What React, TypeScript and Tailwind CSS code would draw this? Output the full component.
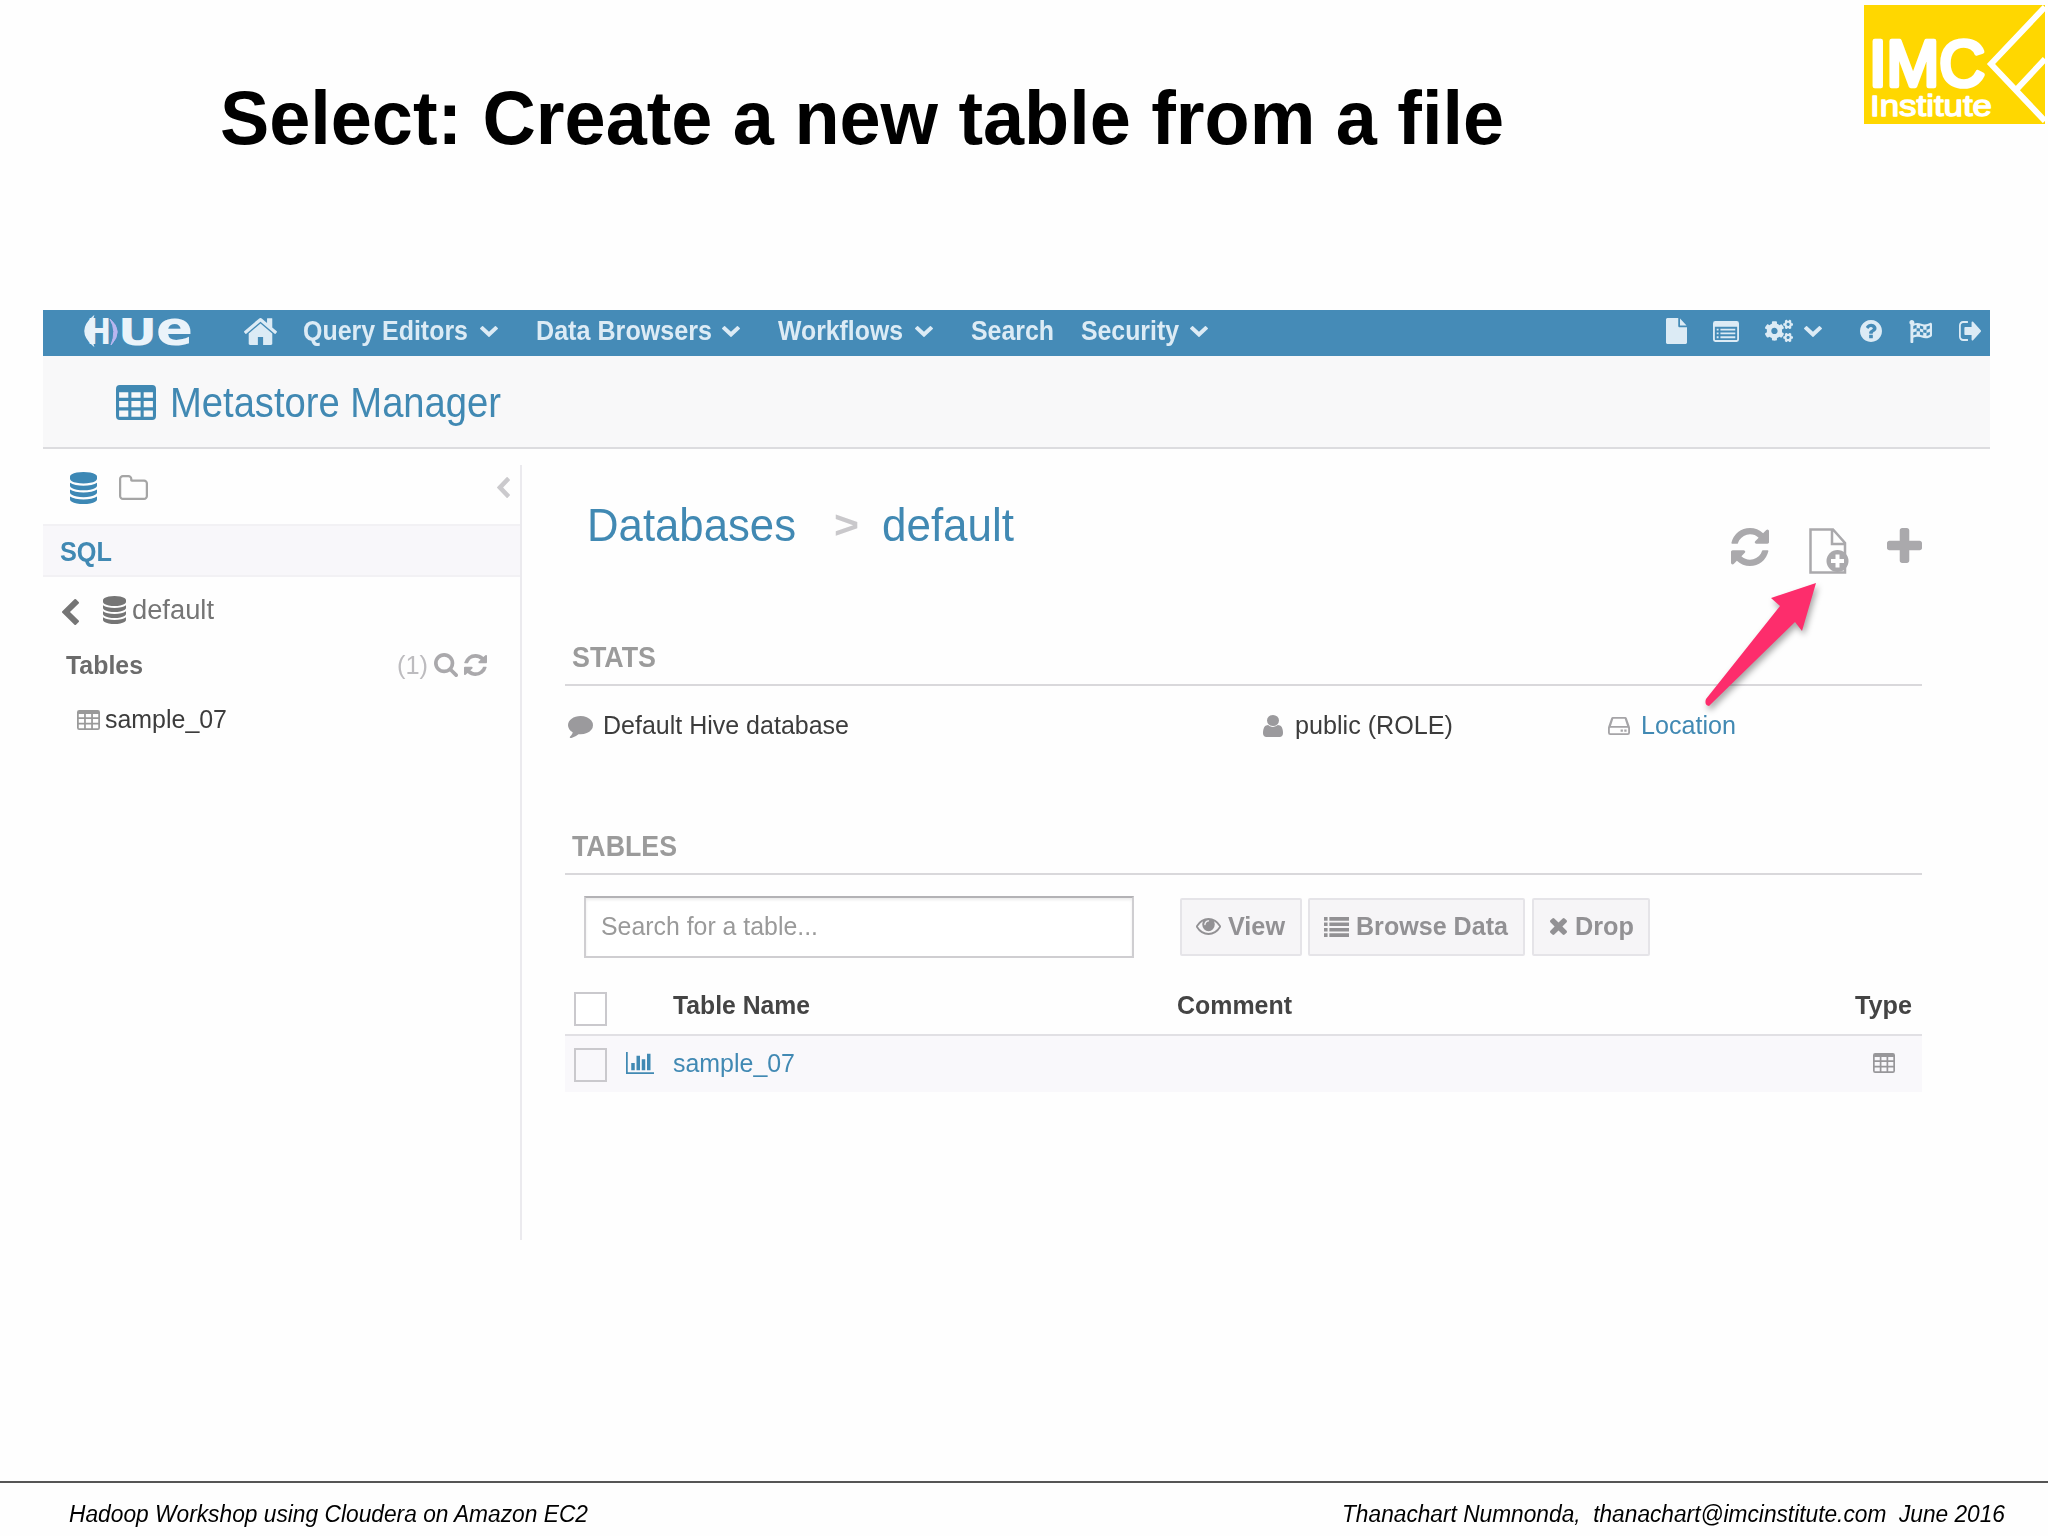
import { useLayoutEffect, useRef, useState } from 'react';
import type { ReactNode } from 'react';
import { FaCogs, FaFlagCheckered } from 'react-icons/fa';

interface FitTextProps {
  className: string;
  children: ReactNode;
}

// Single line of text condensed or widened to the width of its box
function FitText({ className, children }: FitTextProps) {
  const box = useRef<HTMLSpanElement>(null);
  const inner = useRef<HTMLSpanElement>(null);
  const [scale, setScale] = useState(1);

  useLayoutEffect(() => {
    if (box.current && inner.current) {
      setScale(box.current.offsetWidth / inner.current.getBoundingClientRect().width);
    }
  }, []);

  return (
    <span ref={box} className={`block shrink-0 whitespace-pre ${className}`}>
      <span ref={inner} className="inline-block origin-left" style={{ transform: `scaleX(${scale})` }}>
        {children}
      </span>
    </span>
  );
}

const icons = {
  home: {
    box: '90 248 1613 1288',
    d: 'M1472 992v480q0 26-19 45t-45 19h-384v-384h-256v384h-384q-26 0-45-19t-19-45v-480q0-1 .5-3t.5-3l575-474 575 474q1 2 1 6zm223-69l-62 74q-8 9-21 11h-3q-13 0-21-7l-692-577-692 577q-12 8-24 7-13-2-21-11l-62-74q-8-10-7-23.5t11-21.5l719-599q32-26 76-26t76 26l244 204v-195q0-14 9-23t23-9h192q14 0 23 9t9 23v408l219 182q10 8 11 21.5t-7 23.5z',
  },
  chevronDown: {
    box: '90 533 1612 1035',
    d: 'M1683 808l-742 741q-19 19-45 19t-45-19l-742-741q-19-19-19-45.5t19-45.5l166-165q19-19 45-19t45 19l531 531 531-531q19-19 45-19t45 19l166 165q19 19 19 45.5t-19 45.5z',
  },
  chevronLeft: {
    box: '0 0 1035 1612',
    d: 'M760 19l-741 742q-19 19-19 45t19 45l741 742q19 19 45.500 19t45.500-19l165-166q19-19 19-45t-19-45l-531-531 531-531q19-19 19-45t-19-45l-165-166q-19-19-45.500-19t-45.500 19z',
  },
  file: {
    box: '0 0 1536 1792',
    d: 'M1024 512v-472q22 14 36 28l408 408q14 14 28 36zm-128 32q0 40 28 68t68 28h544v1056q0 40-28 68t-68 28h-1344q-40 0-68-28t-28-68v-1600q0-40 28-68t68-28h800z',
  },
  listAlt: {
    box: '0 0 1792 1408',
    d: 'M160 0h1472q160 0 160 160v1088q0 160-160 160h-1472q-160 0-160-160v-1088q0-160 160-160zM128 384v832q0 64 64 64h1408q64 0 64-64v-832zM256 512h128v128h-128zM512 512h1024v128h-1024zM256 768h128v128h-128zM512 768h1024v128h-1024zM256 1024h128v128h-128zM512 1024h1024v128h-1024z',
  },
  question: {
    box: '128 128 1536 1536',
    d: 'M1024 1376v-192q0-14-9-23t-23-9h-192q-14 0-23 9t-9 23v192q0 14 9 23t23 9h192q14 0 23-9t9-23zm256-672q0-88-55.5-163t-138.5-116-170-41q-243 0-371 213-15 24 8 42l132 100q7 6 19 6 16 0 25-12 53-68 86-92 34-24 86-24 48 0 85.5 26t37.5 59q0 38-20 61t-68 45q-63 28-115.5 86.5t-52.5 125.5v36q0 14 9 23t23 9h192q14 0 23-9t9-23q0-19 21.5-49.5t54.5-49.5q32-18 49-28.5t46-35 44.5-48 28-60.5 12.5-81zm384 192q0 209-103 385.5t-279.5 279.5-385.5 103-385.5-103-279.5-279.5-103-385.5 103-385.5 279.5-279.5 385.5-103 385.5 103 279.5 279.5 103 385.5z',
  },
  signOut: {
    box: '64 256 1568 1280',
    d: 'M704 1440q0 4 1 20t.5 26.5-3 23.5-10 19.5-20.5 6.5h-320q-119 0-203.5-84.5t-84.5-203.5v-704q0-119 84.5-203.5t203.5-84.5h320q13 0 22.5 9.5t9.5 22.5q0 4 1 20t.5 26.5-3 23.5-10 19.5-20.5 6.5h-320q-66 0-113 47t-47 113v704q0 66 47 113t113 47h312l11.5 1 11.5 3 8 5.5 7 9 2 13.5zm928-544q0 26-19 45l-544 544q-19 19-45 19t-45-19-19-45v-288h-448q-26 0-45-19t-19-45v-384q0-26 19-45t45-19h448v-288q0-26 19-45t45-19 45 19l544 544q19 19 19 45z',
  },
  table: {
    box: '0 0 1664 1408',
    d: 'M160 0h1344q160 0 160 160v1088q0 160-160 160h-1344q-160 0-160-160v-1088q0-160 160-160zM128 288v224h384v-224zM640 288v224h384v-224zM1152 288v224h384v-224zM128 640v256h384v-256zM640 640v256h384v-256zM1152 640v256h384v-256zM128 1024v256h384v-256zM640 1024v256h384v-256zM1152 1024v256h384v-256z',
  },
  database: {
    box: '128 0 1536 1792',
    d: 'M896 768q237 0 443-43t325-127v170q0 69-103 128t-280 93.5-385 34.5-385-34.5-280-93.5-103-128v-170q119 84 325 127t443 43zm0 768q237 0 443-43t325-127v170q0 69-103 128t-280 93.5-385 34.5-385-34.5-280-93.5-103-128v-170q119 84 325 127t443 43zm0-384q237 0 443-43t325-127v170q0 69-103 128t-280 93.5-385 34.5-385-34.5-280-93.5-103-128v-170q119 84 325 127t443 43zm0-1152q208 0 385 34.5t280 93.5 103 128v128q0 69-103 128t-280 93.5-385 34.5-385-34.5-280-93.5-103-128v-128q0-69 103-128t280-93.5 385-34.5z',
  },
  folder: {
    box: '64 128 1664 1408',
    d: 'M1600 1312v-704q0-40-28-68t-68-28h-704q-40 0-68-28t-28-68v-64q0-40-28-68t-68-28h-320q-40 0-68 28t-28 68v960q0 40 28 68t68 28h1216q40 0 68-28t28-68zm128-704v704q0 92-66 158t-158 66h-1216q-92 0-158-66t-66-158v-960q0-92 66-158t158-66h320q92 0 158 66t66 158v32h672q92 0 158 66t66 158z',
  },
  search: {
    box: '64 128 1664 1664',
    d: 'M1216 832q0-185-131.5-316.5t-316.5-131.5-316.5 131.5-131.5 316.5 131.5 316.5 316.5 131.5 316.5-131.5 131.5-316.5zm512 832q0 52-38 90t-90 38q-54 0-90-38l-343-342q-179 124-399 124-143 0-273.5-55.5t-225-150-150-225-55.5-273.5 55.5-273.5 150-225 225-150 273.5-55.5 273.5 55.5 225 150 150 225 55.5 273.5q0 220-124 399l343 343q37 37 37 90z',
  },
  refresh: {
    box: '128 128 1536 1536',
    d: 'M1639 1056q0 5-1 7-64 268-268 434.5t-478 166.5q-146 0-282.5-55t-243.5-157l-129 129q-19 19-45 19t-45-19-19-45v-448q0-26 19-45t45-19h448q26 0 45 19t19 45-19 45l-137 137q71 66 161 102t187 36q134 0 250-65t186-179q11-17 53-117 8-23 30-23h192q13 0 22.5 9.5t9.5 22.5zm25-800v448q0 26-19 45t-45 19h-448q-26 0-45-19t-19-45 19-45l138-138q-148-137-349-137-134 0-250 65t-186 179q-11 17-53 117-8 23-30 23h-199q-13 0-22.5-9.5t-9.5-22.5v-7q65-268 270-434.5t480-166.5q146 0 284 55.5t245 156.5l130-129q19-19 45-19t45 19 19 45z',
  },
  plus: {
    box: '192 128 1408 1408',
    d: 'M1600 736v192q0 40-28 68t-68 28h-416v416q0 40-28 68t-68 28h-192q-40 0-68-28t-28-68v-416h-416q-40 0-68-28t-28-68v-192q0-40 28-68t68-28h416v-416q0-40 28-68t68-28h192q40 0 68 28t28 68v416h416q40 0 68 28t28 68z',
  },
  comment: {
    box: '0 256 1792 1536',
    d: 'M1792 896q0 174-120 321.5t-326 233-450 85.5q-70 0-145-8-198 175-460 242-49 14-114 22-17 2-30.5-9t-17.5-29v-1q-3-4-.5-12t2-10 4.5-9.5l6-9 7-8.5 8-9q7-8 31-34.5t34.5-38 31-39.5 32.5-51 27-59 26-76q-157-89-247.5-220t-90.5-281q0-130 71-248.5t191-204.5 286-136.5 348-50.5q244 0 450 85.5t326 233 120 321.5z',
  },
  user: {
    box: '256 128 1280 1536',
    d: 'M1536 1399q0 109-62.5 187t-150.5 78h-854q-88 0-150.5-78t-62.5-187q0-85 8.5-160.5t31.5-152 58.5-131 94-89 134.5-34.5q131 128 313 128t313-128q76 0 134.5 34.5t94 89 58.5 131 31.5 152 8.5 160.5zm-256-887q0 159-112.5 271.5t-271.5 112.5-271.5-112.5-112.5-271.5 112.5-271.5 271.5-112.5 271.5 112.5 112.5 271.5z',
  },
  disk: {
    box: '0 0 1536 1280',
    d: 'M340 0h856q90 0 120 85l200 590q20 60 20 120v325q0 160-160 160h-1216q-160 0-160-160v-325q0-60 20-120l200-590q30-85 120-85zM370 128l-167 512h1130l-167-512zM128 800v320q0 32 32 32h1216q32 0 32-32v-320q0-32-32-32h-1216q-32 0-32 32zM880 880h160v160h-160zM1136 880h160v160h-160z',
  },
  eye: {
    box: '0 384 1792 1152',
    d: 'M1664 960q-152-236-381-353 61 104 61 225 0 185-131.5 316.5t-316.5 131.5-316.5-131.5-131.5-316.5q0-121 61-225-229 117-381 353 133 205 333.5 326.5t434.5 121.5 434.5-121.5 333.5-326.5zm-720-384q0-20-14-34t-34-14q-125 0-214.5 89.5t-89.5 214.5q0 20 14 34t34 14 34-14 14-34q0-86 61-147t147-61q20 0 34-14t14-34zm848 384q0 34-20 69-140 230-376.5 368.5t-499.5 138.5-499.5-139-376.5-368q-20-35-20-69t20-69q140-229 376.5-368t499.5-139 499.5 139 376.5 368q20 35 20 69z',
  },
  list: {
    box: '0 0 1792 1408',
    d: 'M0 0h256v256h-256zM384 0h1408v256h-1408zM0 384h256v256h-256zM384 384h1408v256h-1408zM0 768h256v256h-256zM384 768h1408v256h-1408zM0 1152h256v256h-256zM384 1152h1408v256h-1408z',
  },
  times: {
    box: '302 366 1188 1188',
    d: 'M1490 1322q0 40-28 68l-136 136q-28 28-68 28t-68-28l-294-294-294 294q-28 28-68 28t-68-28l-136-136q-28-28-28-68t28-68l294-294-294-294q-28-28-28-68t28-68l136-136q28-28 68-28t68 28l294 294 294-294q28-28 68-28t68 28l136 136q28 28 28 68t-28 68l-294 294 294 294q28 28 28 68z',
  },
  chart: {
    box: '0 128 2048 1536',
    d: 'M640 896v512h-256v-512h256zm384-512v1024h-256v-1024h256zm1024 1152v128h-2048v-1536h128v1408h1920zm-640-896v768h-256v-768h256zm384-384v1152h-256v-1152h256z',
  },
};

function Icon({ name, className }: { name: keyof typeof icons; className: string }) {
  return (
    <svg viewBox={icons[name].box} preserveAspectRatio="none" fill="currentColor" className={`shrink-0 ${className}`}>
      <path fillRule="evenodd" d={icons[name].d} />
    </svg>
  );
}

function ImcLogo() {
  return (
    <svg viewBox="0 0 181 119" className="w-[181px] h-[119px] shrink-0 overflow-visible">
      <rect width="181" height="119" fill="#ffd700" />
      <path d="M181 2L127 59L181 116M153 84L181 54" fill="none" stroke="#fff" strokeWidth="6" />
      <g fill="#fff" stroke="#fff" strokeLinejoin="round" fontFamily="Liberation Sans, sans-serif">
        <text x="5" y="81" fontSize="64" strokeWidth="4.5" textLength="116" lengthAdjust="spacingAndGlyphs">IMC</text>
        <text x="6" y="111" fontSize="29" strokeWidth="1.3" textLength="122" lengthAdjust="spacingAndGlyphs">Institute</text>
      </g>
    </svg>
  );
}

function HueLogo() {
  return (
    <svg viewBox="0 0 107 30" className="w-[107px] h-[30px] shrink-0 overflow-visible">
      <path d="M9 1Q-7 15 9 29Q5 15 9 1z" fill="#e6f1f9" stroke="#e6f1f9" strokeWidth="1.5" />
      <path d="M26 3Q40 15 27 29Q33 15 26 3z" fill="#b9b6f0" stroke="#b9b6f0" />
      <g fill="#eaf3fa" fontFamily="DejaVu Sans, sans-serif" fontWeight="700">
        <text x="3" y="28" fontSize="36" textLength="24" lengthAdjust="spacingAndGlyphs">H</text>
        <text x="34" y="28.500" fontSize="38" textLength="39" lengthAdjust="spacingAndGlyphs">U</text>
        <text x="72" y="28.500" fontSize="48" textLength="37" lengthAdjust="spacingAndGlyphs">e</text>
      </g>
    </svg>
  );
}

function NavBar() {
  return (
    <nav className="flex h-[46px] items-center bg-[#458bb7] pb-[4px] pl-[41px] pr-[9px] text-[27px] font-bold text-[#dcebf5]">
      <HueLogo />
      <Icon name="home" className="ml-[53px] h-[27px] w-[33px]" />
      <FitText className="ml-[26px] w-[165px]">Query Editors</FitText>
      <Icon name="chevronDown" className="ml-[12px] h-[11px] w-[18px]" />
      <FitText className="ml-[38px] w-[176px]">Data Browsers</FitText>
      <Icon name="chevronDown" className="ml-[10px] h-[11px] w-[18px]" />
      <FitText className="ml-[38px] w-[125px]">Workflows</FitText>
      <Icon name="chevronDown" className="ml-[12px] h-[11px] w-[18px]" />
      <FitText className="ml-[38px] w-[83px]">Search</FitText>
      <FitText className="ml-[27px] w-[98px]">Security</FitText>
      <Icon name="chevronDown" className="ml-[11px] h-[11px] w-[18px]" />

      <div className="ml-auto flex items-center">
        <Icon name="file" className="h-[26px] w-[21px]" />
        <Icon name="listAlt" className="ml-[26px] h-[21px] w-[26px]" />
        <FaCogs className="ml-[26px] h-[28px] w-[28px]" />
        <Icon name="chevronDown" className="ml-[11px] h-[11px] w-[18px]" />
        <Icon name="question" className="ml-[38px] h-[22px] w-[22px]" />
        <FaFlagCheckered className="ml-[26px] h-[23px] w-[25px]" />
        <Icon name="signOut" className="ml-[26px] h-[20px] w-[22px]" />
      </div>
    </nav>
  );
}

function Sidebar() {
  return (
    <aside className="mt-[16px] flex h-[775px] w-[479px] shrink-0 flex-col border-r-2 border-[#ebeaee]">
      <div className="flex h-[59px] items-center pb-[14px] pl-[27px] pr-[10px] pt-0">
        <Icon name="database" className="h-[32px] w-[27px] text-[#3d88b5]" />
        <Icon name="folder" className="ml-[22px] h-[25px] w-[29px] text-[#a5a5a5]" />
        <Icon name="chevronLeft" className="ml-auto h-[21px] w-[13px] text-[#cbcacd]" />
      </div>
      <div className="flex h-[53px] items-center border-y-2 border-[#f2f1f4] bg-[#f8f7fa] pl-[17px] pt-[3px] text-[27px] font-bold text-[#4189b3]">
        <FitText className="w-[52px]">SQL</FitText>
      </div>
      <div className="flex h-[66px] items-center pl-[19px] text-[27px] text-[#757575]">
        <div className="flex items-center">
          <Icon name="chevronLeft" className="mt-[3px] h-[26px] w-[17px]" />
          <Icon name="database" className="ml-[24px] h-[28px] w-[23px]" />
          <FitText className="ml-[6px] w-[82px]">default</FitText>
        </div>
      </div>
      <div className="flex h-[44px] items-center pl-[23px] pr-[33px] text-[26px] text-[#bdbcbf]">
        <FitText className="w-[77px] font-bold text-[#6b6b6b]">Tables</FitText>
        <FitText className="ml-auto w-[31px]">(1)</FitText>
        <Icon name="search" className="ml-[6px] h-[24px] w-[24px] text-[#aaa9ac]" />
        <Icon name="refresh" className="ml-[6px] h-[22px] w-[23px] text-[#aaa9ac]" />
      </div>
      <div className="flex h-[65px] items-center pl-[34px] text-[26px] text-[#3c3c3c]">
        <Icon name="table" className="h-[20px] w-[23px] text-[#9a9a9a]" />
        <FitText className="ml-[5px] w-[122px]">sample_07</FitText>
      </div>
    </aside>
  );
}

function FileAddIcon() {
  return (
    <svg viewBox="0 0 40 46" className="ml-[40px] h-[46px] w-[40px] shrink-0" fill="none" stroke="#aaa9ac" strokeWidth="2.500">
      <path d="M1.500 1.500H24L36 15V44.500H1.500zM23 2V16H36" />
      <circle cx="28.500" cy="33" r="11" fill="#aaa9ac" stroke="none" />
      <path d="M28.500 26.500v13M22 33h13" stroke="#fff" strokeWidth="4" />
    </svg>
  );
}

function PointerArrow() {
  return (
    <svg viewBox="0 0 124 138" className="absolute left-[1700px] top-[577px] h-[138px] w-[124px] drop-shadow-[2px_4px_3px_rgba(0,0,0,0.35)]">
      <path d="M116 6L71 21L80 29L6 122Q4 128 9 129L95 45L102 54z" fill="#fd2d6c" />
    </svg>
  );
}

function Main() {
  return (
    <main className="flex w-[1357px] flex-col ml-[43px]">
      <div className="flex h-[192px] text-[47px] text-[#4189b3]">
        <div className="flex h-[153px] items-center">
          <FitText className="ml-[22px] w-[209px]">Databases</FitText>
          <FitText className="ml-[38px] w-[25px] text-[38px] font-bold text-[#c9c8cb]">&gt;</FitText>
          <FitText className="ml-[23px] w-[132px]">default</FitText>
        </div>
        <div className="ml-auto flex items-start pt-[79px] text-[#aaa9ac]">
          <Icon name="refresh" className="h-[38px] w-[38px]" />
          <FileAddIcon />
          <Icon name="plus" className="ml-[38px] h-[35px] w-[35px]" />
        </div>
      </div>

      <h2 className="flex h-[45px] items-center border-b-2 border-[#d9d8db] pb-[10px] pl-[7px] text-[29px] leading-none font-bold text-[#9b9b9b]">
        <FitText className="w-[84px]">STATS</FitText>
      </h2>
      <div className="flex h-[79px] items-center text-[26px] text-[#3c3c3c]">
        <Icon name="comment" className="ml-[3px] mt-[3px] h-[22px] w-[25px] text-[#9b9a9d]" />
        <FitText className="ml-[10px] w-[246px]">Default Hive database</FitText>
        <Icon name="user" className="ml-[414px] h-[22px] w-[20px] text-[#9b9a9d]" />
        <FitText className="ml-[12px] w-[158px]">public (ROLE)</FitText>
        <Icon name="disk" className="ml-[155px] h-[18px] w-[22px] text-[#a5a4a7]" />
        <FitText className="ml-[11px] w-[95px] text-[#4189b3]">Location</FitText>
      </div>

      <h2 className="mt-[57px] flex h-[53px] items-center border-b-2 border-[#d9d8db] pb-[2px] pl-[7px] text-[29px] font-bold text-[#9b9b9b]">
        <FitText className="w-[105px]">TABLES</FitText>
      </h2>
      <div className="flex h-[103px] items-center pl-[19px] text-[26px] font-bold text-[#929194]">
        <div className="flex h-[62px] w-[550px] items-center border-2 border-[#cfced1] border-t-[#b3b2b5] bg-white pl-[15px] font-normal text-[#9a9a9a] shadow-[inset_0_2px_3px_rgba(0,0,0,0.08)]">
          <FitText className="w-[217px]">Search for a table...</FitText>
        </div>
        <button className="ml-[46px] flex h-[58px] w-[122px] items-center rounded-xs border-2 border-[#e5e4e8] bg-[#f6f5f7] pl-[14px]">
          <Icon name="eye" className="h-[17px] w-[25px]" />
          <FitText className="ml-[7px] w-[57px]">View</FitText>
        </button>
        <button className="ml-[6px] flex h-[58px] w-[217px] items-center rounded-xs border-2 border-[#e5e4e8] bg-[#f6f5f7] pl-[14px]">
          <Icon name="list" className="h-[20px] w-[25px]" />
          <FitText className="ml-[7px] w-[152px]">Browse Data</FitText>
        </button>
        <button className="ml-[7px] flex h-[58px] w-[118px] items-center rounded-xs border-2 border-[#e5e4e8] bg-[#f6f5f7] pl-[16px]">
          <Icon name="times" className="h-[17px] w-[17px]" />
          <FitText className="ml-[8px] w-[59px]">Drop</FitText>
        </button>
      </div>

      <div className="flex h-[58px] items-center border-b-2 border-[#e1e0e4] pb-[2px] text-[26px] font-bold text-[#444]">
        <span className="ml-[9px] mt-[8px] h-[34px] w-[33px] border-2 border-[#cac9cd] bg-white" />
        <FitText className="ml-[66px] w-[137px]">Table Name</FitText>
        <FitText className="ml-[367px] w-[115px]">Comment</FitText>
        <FitText className="ml-auto mr-[10px] w-[57px]">Type</FitText>
      </div>
      <div className="flex h-[56px] items-center bg-[#f9f8fb] pb-[2px] text-[26px] text-[#4189b3]">
        <span className="ml-[9px] mt-[4px] h-[34px] w-[33px] border-2 border-[#cac9cd]" />
        <Icon name="chart" className="ml-[19px] h-[22px] w-[28px]" />
        <FitText className="ml-[19px] w-[122px]">sample_07</FitText>
        <Icon name="table" className="ml-auto mr-[27px] h-[20px] w-[22px] text-[#98979a]" />
      </div>
    </main>
  );
}

export default function App() {
  return (
    <div className="relative flex h-[1536px] w-[2048px] flex-col overflow-hidden bg-[#fefefe] font-['Liberation_Sans',sans-serif]">
      <header className="flex h-[310px] items-start pl-[220px] pr-[3px] pt-[5px] text-black">
        <h1 className="pt-[63px] text-[76px] leading-[100px] font-bold">
          <FitText className="w-[1284px]">Select: Create a new table from a file</FitText>
        </h1>
        <div className="ml-auto">
          <ImcLogo />
        </div>
      </header>

      <section className="ml-[43px] flex w-[1947px] flex-col">
        <NavBar />
        <div className="flex h-[93px] items-center border-b-2 border-[#dcdcdf] bg-[#f8f8f9] pl-[73px] pt-[2px] text-[42px] text-[#4189b3]">
          <Icon name="table" className="h-[35px] w-[40px]" />
          <FitText className="ml-[14px] w-[331px]">Metastore Manager</FitText>
        </div>
        <div className="flex">
          <Sidebar />
          <Main />
        </div>
      </section>

      <footer className="mt-auto flex h-[55px] items-center justify-between border-t-2 border-[#555] pl-[69px] pr-[43px] pt-[9px] text-[23px] text-black italic">
        <FitText className="w-[519px]">Hadoop Workshop using Cloudera on Amazon EC2</FitText>
        <FitText className="w-[663px]">Thanachart Numnonda,  thanachart@imcinstitute.com  June 2016</FitText>
      </footer>

      <PointerArrow />
    </div>
  );
}
